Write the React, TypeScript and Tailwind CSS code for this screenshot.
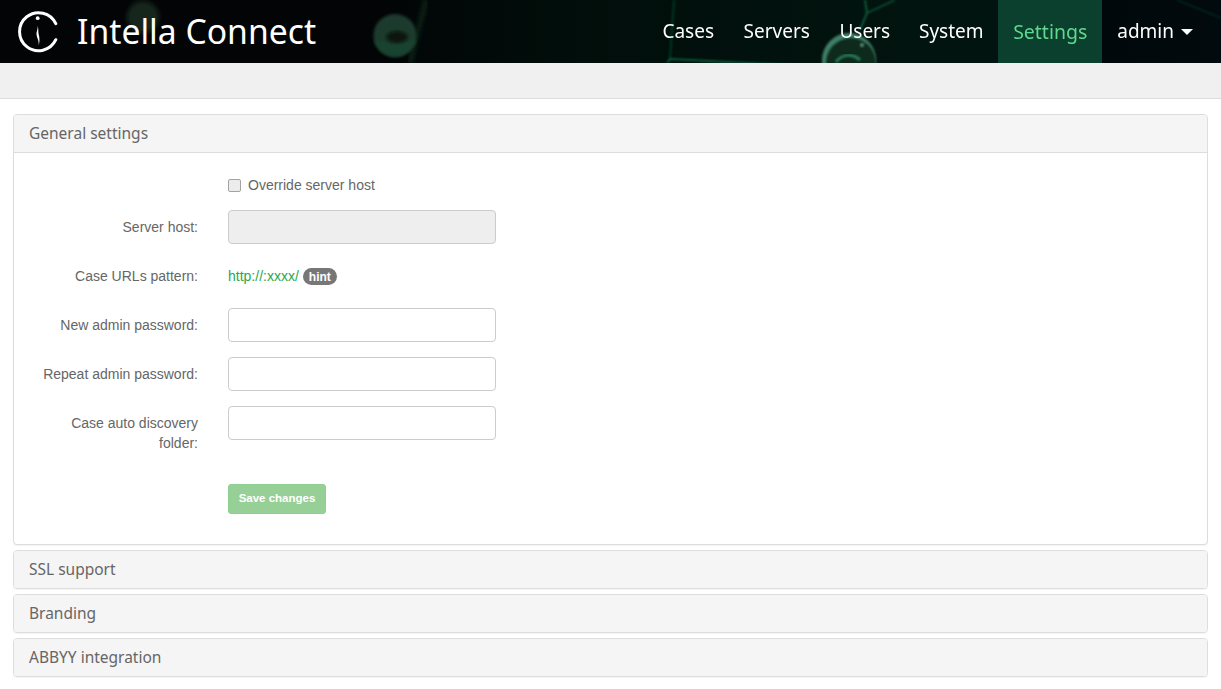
import React from 'react';

const headingFont = 'font-["Noto_Sans","Open_Sans",sans-serif]';

// Swirly "i" in an open ring, white on the dark header
function Logo() {
  return (
    <svg width="42" height="44" viewBox="0 0 42 44" className="shrink-0">
      <path d="M38.8 13.7 A19 19 0 1 0 38.8 29.7" fill="none" stroke="#fff" strokeWidth="3" strokeLinecap="round" />
      <circle cx="20.7" cy="8.2" r="1.9" fill="#fff" />
      <path d="M20.4 15.5 C21.4 19 19.2 21 19.6 25 C19.9 28 22 30 21.8 35.5 C23 30 22.4 27 21.6 24 C21 21 21.8 18 20.4 15.5 Z" fill="#fff" />
    </svg>
  );
}

// Blurred network picture behind the header
function HeaderBackdrop() {
  return (
    <svg className="absolute inset-0 h-full w-full" viewBox="0 0 1221 63" preserveAspectRatio="none">
      <defs>
        <linearGradient id="bg" x1="0" x2="1" y1="0" y2="0">
          <stop offset="0" stopColor="#020406" />
          <stop offset="0.31" stopColor="#020406" />
          <stop offset="0.45" stopColor="#010d0a" />
          <stop offset="0.74" stopColor="#02140f" />
          <stop offset="0.82" stopColor="#02140f" />
          <stop offset="0.9" stopColor="#01080c" />
          <stop offset="1" stopColor="#010a0e" />
        </linearGradient>
        <filter id="b1"><feGaussianBlur stdDeviation="2.5" /></filter>
        <filter id="b2"><feGaussianBlur stdDeviation="0.8" /></filter>
        <filter id="b3"><feGaussianBlur stdDeviation="1.6" /></filter>
      </defs>
      <rect width="1221" height="63" fill="url(#bg)" />
      <circle cx="143" cy="17" r="16" fill="#17261e" filter="url(#b1)" />
      <path d="M320 36 H376" stroke="#0a1a12" strokeWidth="4" filter="url(#b1)" />
      <path d="M426 0 L410 63" stroke="#0c2418" strokeWidth="5" filter="url(#b1)" />
      <circle cx="395" cy="35.5" r="21.5" fill="#1f3a2d" filter="url(#b3)" />
      <path d="M374 40 A21.5 21.5 0 0 0 416 40 L396 44 Z" fill="#184a30" opacity="0.6" filter="url(#b3)" />
      <ellipse cx="397" cy="37" rx="11" ry="6" fill="#071410" filter="url(#b3)" />
      <g stroke="#0c5a3c" fill="none" filter="url(#b2)">
        <path d="M667 63 L670 59 L823 67" strokeWidth="2" />
        <path d="M670 59 L674 0" strokeWidth="2" opacity="0.55" />
        <path d="M860 30 L867 13 L865 0" strokeWidth="2" />
        <path d="M867 13 L895 0" strokeWidth="2" opacity="0.7" />
        <path d="M1177 0 L1221 18" strokeWidth="2" opacity="0.3" />
      </g>
      <circle cx="849" cy="60" r="27" fill="#3f7f68" filter="url(#b2)" />
      <circle cx="851" cy="63" r="25" fill="#0c2a1f" filter="url(#b2)" />
      <path d="M836 62 C842 54 852 53 860 60" fill="none" stroke="#2a7a58" strokeWidth="3" filter="url(#b2)" />
      <circle cx="862" cy="45" r="2" fill="#5f8f7e" filter="url(#b2)" />
    </svg>
  );
}

const navItems = [
  { label: 'Cases', width: 'w-[80px]' },
  { label: 'Servers', width: 'w-[97px]' },
  { label: 'Users', width: 'w-[79px]' },
  { label: 'System', width: 'w-[94px]' },
];

function Header() {
  return (
    <header className={`relative flex h-[63px] items-center overflow-hidden ${headingFont}`}>
      <HeaderBackdrop />
      <div className="relative ml-[17px] flex items-center">
        <Logo />
        <span className="ml-[18px] text-[33.7px] leading-none text-white">Intella Connect</span>
      </div>
      <nav className="relative ml-auto flex h-full items-center text-[19px] text-white">
        {navItems.map(item => (
          <a key={item.label} className={`flex h-full items-center justify-center ${item.width}`}>{item.label}</a>
        ))}
        <a className="flex h-full w-[104px] items-center justify-center bg-[#0b3f2e] text-[19.5px] text-[#5fd98d]">Settings</a>
        <a className="flex h-full items-center pl-[15px] pr-[28px]">
          admin
          <span className="ml-[7px] h-0 w-0 border-x-[6px] border-t-[6px] border-x-transparent border-t-white" />
        </a>
      </nav>
    </header>
  );
}

function PanelHeading({ title, open }: { title: string; open?: boolean }) {
  return (
    <div className={`flex items-center bg-[#f5f5f5] px-[15px] text-[15.5px] text-[#666] ${headingFont} ${open ? 'h-[38px] border-b border-[#ddd]' : 'h-[37px]'}`}>
      {title}
    </div>
  );
}

function FormRow({ label, children, className = '' }: { label: string; children: React.ReactNode; className?: string }) {
  return (
    <div className={`flex ${className}`}>
      <label className="mr-[30px] w-[169px] shrink-0 pt-[7px] text-right leading-[20px]">{label}</label>
      {children}
    </div>
  );
}

function TextInput({ disabled }: { disabled?: boolean }) {
  return (
    <input
      type="text"
      disabled={disabled}
      className={`h-[34px] w-[268px] rounded-[4px] border border-[#ccc] ${disabled ? 'bg-[#eee]' : 'bg-white'}`}
    />
  );
}

export default function App() {
  return (
    <div className="min-h-[689px] bg-white font-['Liberation_Sans',Arial,sans-serif] text-[14px] text-[#666]">
      <Header />
      <div className="h-[36px] border-b border-[#ddd] bg-[#f0f0f0]" />

      <main className="mx-[13px] mt-[15px] flex flex-col gap-[5px]">
        <section className="overflow-hidden rounded-[4px] border border-[#ddd] bg-white shadow-[0_1px_1px_rgba(0,0,0,0.05)]">
          <PanelHeading title="General settings" open />
          <div className="flex h-[391px] flex-col px-[15px] pt-[15px]">
            <div className="ml-[199px] flex h-[27px] items-start">
              <label className="flex items-center pt-[7px] leading-[20px] text-[#666]">
                <input type="checkbox" className="mr-[7px] h-[13px] w-[13px] appearance-none rounded-[2px] border border-[#a3a3a3] bg-[#ececec]" />
                Override server host
              </label>
            </div>
            <FormRow label="Server host:" className="mt-[15px]"><TextInput disabled /></FormRow>
            <FormRow label="Case URLs pattern:" className="mt-[15px] h-[34px]">
              <div className="flex items-center pt-[1px]">
                <span className="text-[#2ba84a]">http://:xxxx/</span>
                <span className="ml-[4px] flex h-[17px] items-center rounded-[10px] bg-[#777] px-[6px] text-[12px] font-bold leading-none text-white">hint</span>
              </div>
            </FormRow>
            <FormRow label="New admin password:" className="mt-[15px]"><TextInput /></FormRow>
            <FormRow label="Repeat admin password:" className="mt-[15px]"><TextInput /></FormRow>
            <FormRow label="Case auto discovery folder:" className="mt-[15px]"><TextInput /></FormRow>
            <button className="ml-[199px] mt-[31px] h-[30px] w-[98px] rounded-[3px] border border-[#8fd08f] bg-[#96d096] text-[11.5px] font-bold text-white">
              Save changes
            </button>
          </div>
        </section>
        {['SSL support', 'Branding', 'ABBYY integration'].map(title => (
          <section key={title} className="overflow-hidden rounded-[4px] border border-[#ddd] shadow-[0_1px_1px_rgba(0,0,0,0.05)]">
            <PanelHeading title={title} />
          </section>
        ))}
      </main>
    </div>
  );
}
